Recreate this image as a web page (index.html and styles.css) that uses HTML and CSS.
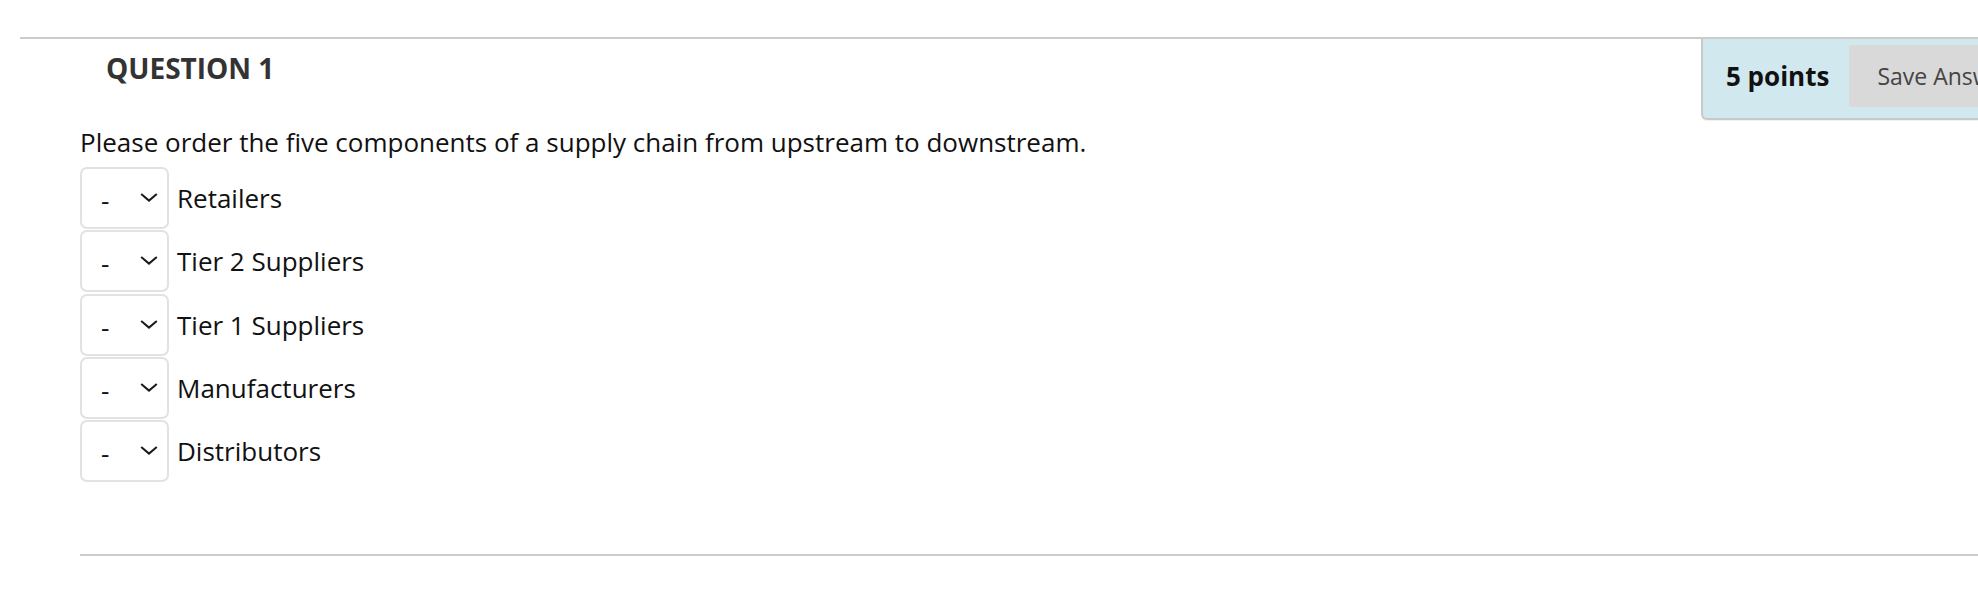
FILE: index.html
```html
<!DOCTYPE html>
<html lang="en">
<head>
<meta charset="utf-8">
<title>Question 1</title>
<link rel="stylesheet" href="styles.css">
</head>
<body>
<div class="page">
  <div class="top-rule"></div>
  <div class="question-header">
    <h3 class="question-title">QUESTION 1</h3>
    <div class="points-box">
      <span class="points">5 points</span>
      <button class="save-btn" type="button">Save Answer</button>
    </div>
  </div>
  <div class="question-body">
    <p class="prompt">Please order the five components of a supply chain from upstream to downstream.</p>
    <div class="order-list">
      <div class="order-row">
        <div class="select"><span class="select-value">-</span><svg class="chev" width="18" height="9" viewBox="0 0 18 9"><polyline points="1.2,1 9,7.6 16.8,1" fill="none" stroke="#1a1a1a" stroke-width="2"/></svg></div>
        <span class="label">Retailers</span>
      </div>
      <div class="order-row">
        <div class="select"><span class="select-value">-</span><svg class="chev" width="18" height="9" viewBox="0 0 18 9"><polyline points="1.2,1 9,7.6 16.8,1" fill="none" stroke="#1a1a1a" stroke-width="2"/></svg></div>
        <span class="label">Tier 2 Suppliers</span>
      </div>
      <div class="order-row">
        <div class="select"><span class="select-value">-</span><svg class="chev" width="18" height="9" viewBox="0 0 18 9"><polyline points="1.2,1 9,7.6 16.8,1" fill="none" stroke="#1a1a1a" stroke-width="2"/></svg></div>
        <span class="label">Tier 1 Suppliers</span>
      </div>
      <div class="order-row">
        <div class="select"><span class="select-value">-</span><svg class="chev" width="18" height="9" viewBox="0 0 18 9"><polyline points="1.2,1 9,7.6 16.8,1" fill="none" stroke="#1a1a1a" stroke-width="2"/></svg></div>
        <span class="label">Manufacturers</span>
      </div>
      <div class="order-row">
        <div class="select"><span class="select-value">-</span><svg class="chev" width="18" height="9" viewBox="0 0 18 9"><polyline points="1.2,1 9,7.6 16.8,1" fill="none" stroke="#1a1a1a" stroke-width="2"/></svg></div>
        <span class="label">Distributors</span>
      </div>
    </div>
    <div class="bottom-rule"></div>
  </div>
</div>
</body>
</html>
```

FILE: styles.css
```css
html, body {
  margin: 0;
  padding: 0;
  background: #fff;
  overflow: hidden;
}
body {
  font-family: "Open Sans", "Noto Sans", sans-serif;
  color: #111;
}
.page {
  padding-top: 37px;
  width: 1978px;
}
.top-rule {
  margin-left: 20px;
  height: 2px;
  background: #cccccc;
}
.question-header {
  display: grid;
  grid-template-columns: 1fr 277px;
  align-items: start;
}
.question-title {
  margin: 10px 0 0 106px;
  font-size: 28px;
  line-height: 38px;
  font-weight: 700;
  color: #333;
}
.points-box {
  display: flex;
  align-items: flex-start;
  white-space: nowrap;
  background: #d2e8ef;
  border-left: 2px solid #c9c9c9;
  border-bottom: 2px solid #c9c9c9;
  border-bottom-left-radius: 6px;
  padding: 6px 0 11px 23px;
  height: 62px;
  box-shadow: 0 1px 1px rgba(0, 0, 0, 0.06);
}
.points {
  font-size: 26px;
  font-weight: 700;
  line-height: 62px;
  color: #111;
  margin-right: 20px;
}
.save-btn {
  flex: 0 0 auto;
  height: 62px;
  padding: 0 28px;
  border: none;
  border-radius: 3px;
  background: #d9d9d9;
  font-family: "Open Sans", "Noto Sans", sans-serif;
  font-size: 23px;
  color: #444;
}
.question-body {
  padding-left: 80px;
}
.prompt {
  margin: 4px 0 7px 0;
  font-size: 26px;
  line-height: 36px;
}
.order-list {
  display: flex;
  flex-direction: column;
  gap: 1.3px;
}
.order-row {
  display: flex;
  align-items: center;
  height: 62px;
}
.select {
  box-sizing: border-box;
  width: 89px;
  height: 62px;
  border: 2px solid #e2e2e2;
  border-radius: 7px;
  display: flex;
  align-items: center;
  padding-left: 19px;
  padding-right: 9px;
}
.select-value {
  font-size: 26px;
  line-height: 1;
  flex: 1;
  padding-top: 4px;
}
.chev {
  display: block;
  margin-top: -1px;
}
.label {
  margin-left: 8px;
  font-size: 26px;
  line-height: 36px;
}
.bottom-rule {
  margin-top: 72px;
  height: 2px;
  background: #cccccc;
}
```
